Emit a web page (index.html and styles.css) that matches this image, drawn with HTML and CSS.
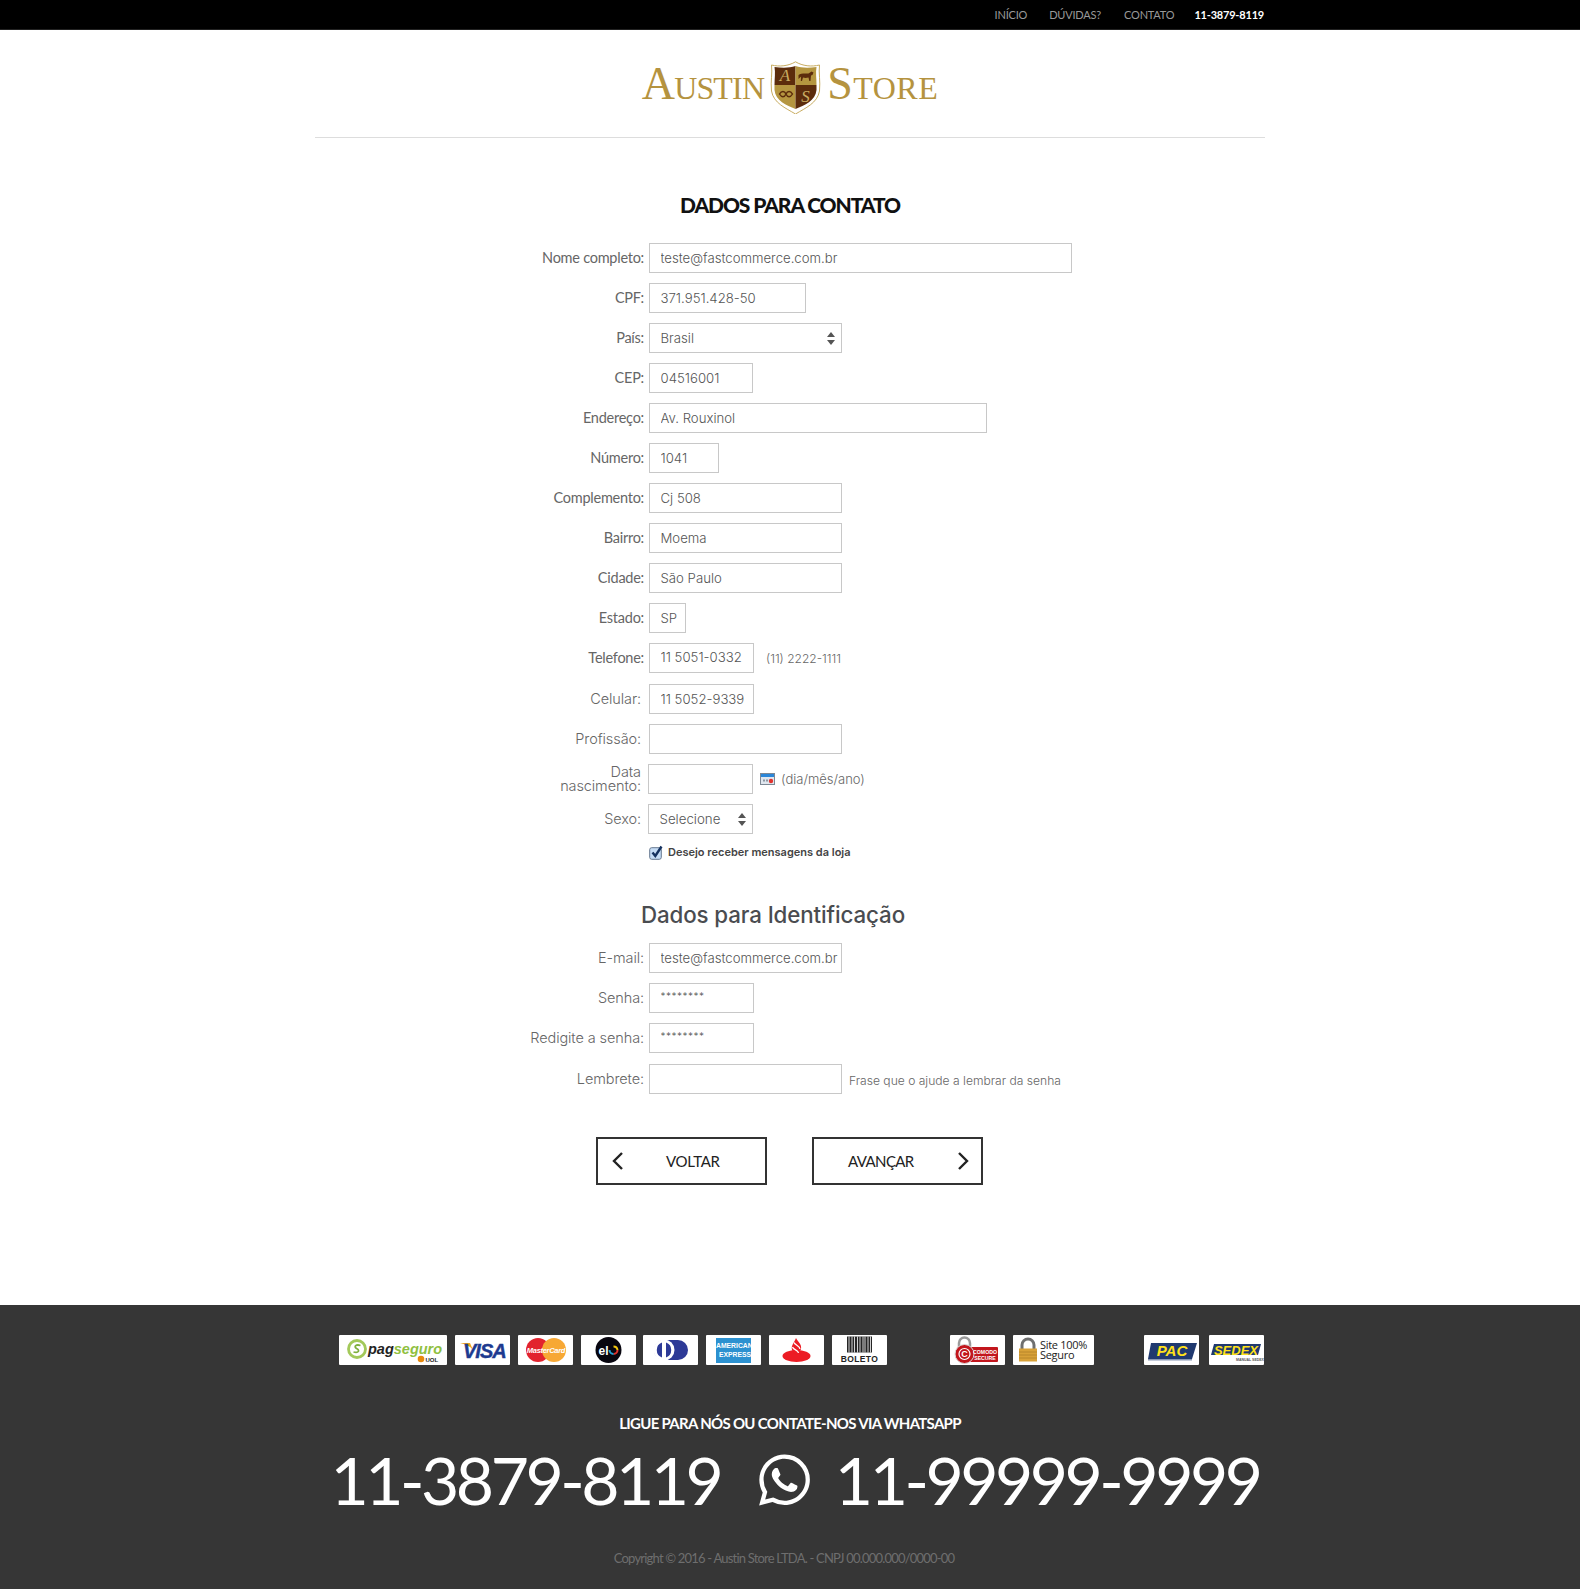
FILE: index.html
```html
<!DOCTYPE html>
<html lang="pt-BR">
<head>
<meta charset="utf-8">
<title>Austin Store - Dados para contato</title>
<link rel="stylesheet" href="styles.css">
</head>
<body>
<header class="topbar">
  <nav class="wrap topnav">
    <a class="nav-link nav-inicio">INÍCIO</a>
    <a class="nav-link nav-duvidas">DÚVIDAS?</a>
    <a class="nav-link nav-contato">CONTATO</a>
    <a class="nav-phone">11-3879-8119</a>
  </nav>
</header>

<div class="wrap">
  <div class="brand">
    <span class="brand-word word-austin">Austin</span>
    <svg class="shield" viewBox="0 0 50 53" aria-hidden="true">
      <path d="M1 4C9 6 18 5 25 .8 32 5 41 6 49 4 48 12 50 20 49 30 47 42 35 47 25 53 15 47 3 42 1 30 0 20 2 12 1 4Z" fill="#fff" stroke="#c9ad62" stroke-width="1"/>
      <path d="M25 5V24H4C4 17 5 12 4 6 12 7 19 7 25 5Z" fill="#5c2c0c"/>
      <path d="M25 5C31 7 38 7 46 6 45 12 46 17 46 24H25Z" fill="#b59640"/>
      <path d="M4 24H25V48C16 44 5 40 4 29Z" fill="#b59640"/>
      <path d="M25 24H46V29C45 40 34 44 25 48Z" fill="#5c2c0c"/>
      <text class="shield-letter" x="14.500" y="20" fill="#c9ad62">A</text>
      <text class="shield-letter" x="35" y="41" fill="#c9ad62">S</text>
      <path d="M28 14C30 12 35 12.500 38 12.500L41 10.500 43 11.500 42 14 40.500 14.500 40 20H38.800L38 16.500C36 17 34 17 32.500 16.500L31.500 20H30.300L30.600 15.500 28 18Z" fill="#5c2c0c"/>
      <path d="M9 33C11 29.500 14 29.500 15.500 33 17 36.500 20 36.500 22 33 20 29.500 17 29.500 15.500 33 14 36.500 11 36.500 9 33Z" fill="none" stroke="#5c2c0c" stroke-width="1.500"/>
    </svg>
    <span class="brand-word word-store">Store</span>
  </div>
  <hr class="rule">

  <main>
    <h1 class="title">DADOS PARA CONTATO</h1>

    <form class="form">
      <div class="row"><label class="label">Nome completo:</label><input class="field w-423" value="teste@fastcommerce.com.br"></div>
      <div class="row"><label class="label">CPF:</label><input class="field w-157" value="371.951.428-50"></div>
      <div class="row"><label class="label">País:</label><select class="field select w-193"><option>Brasil</option></select></div>
      <div class="row"><label class="label">CEP:</label><input class="field w-104" value="04516001"></div>
      <div class="row"><label class="label">Endereço:</label><input class="field w-338" value="Av. Rouxinol"></div>
      <div class="row"><label class="label">Número:</label><input class="field w-70" value="1041"></div>
      <div class="row"><label class="label">Complemento:</label><input class="field w-193" value="Cj 508"></div>
      <div class="row"><label class="label">Bairro:</label><input class="field w-193" value="Moema"></div>
      <div class="row"><label class="label">Cidade:</label><input class="field w-193" value="São Paulo"></div>
      <div class="row"><label class="label">Estado:</label><input class="field w-37" value="SP"></div>
      <div class="row row-wide"><label class="label">Telefone:</label><input class="field w-105 up" value="11 5051-0332"><span class="hint hint-tel">(11) 2222-1111</span></div>
      <div class="row"><label class="label label-light lab-short">Celular:</label><input class="field w-105" value="11 5052-9339"></div>
      <div class="row"><label class="label label-light lab-short">Profissão:</label><input class="field w-193"></div>
      <div class="row"><label class="label label-light lab-date">Data<br>nascimento:</label><input class="field w-105"><svg class="calendar" viewBox="0 0 15 12" aria-hidden="true"><rect x=".5" y=".5" width="14" height="11" fill="#dfe6ee" stroke="#7d8894"/><rect x="1" y="1" width="13" height="3" fill="#2b86d8"/><rect x="3" y="6.500" width="2" height="2" fill="#8c97a3"/><rect x="6" y="6.500" width="2" height="2" fill="#8c97a3"/><circle cx="11" cy="8" r="2.200" fill="#e2322d"/></svg><span class="hint hint-date">(dia/mês/ano)</span></div>
      <div class="row"><label class="label label-light lab-date">Sexo:</label><select class="field select select-sm w-105"><option>Selecione</option></select></div>
      <div class="row row-check">
        <svg class="check" viewBox="0 0 15 15" aria-hidden="true"><rect x=".7" y="2.700" width="11.600" height="11.600" rx="2" fill="#c5dcf5" stroke="#66788f"/><path d="M3.500 7.500 6.300 11 12.500 1.500" fill="none" stroke="#14315f" stroke-width="2.400"/></svg>
        <span class="check-text">Desejo receber mensagens da loja</span>
      </div>

      <h2 class="subtitle">Dados para Identificação</h2>

      <div class="row"><label class="label label-light">E-mail:</label><input class="field w-193" value="teste@fastcommerce.com.br"></div>
      <div class="row"><label class="label label-light">Senha:</label><input class="field w-105 stars" value="********"></div>
      <div class="row row-wide"><label class="label label-light">Redigite a senha:</label><input class="field w-105 stars" value="********"></div>
      <div class="row row-last"><label class="label label-light">Lembrete:</label><input class="field w-193"><span class="hint hint-rem">Frase que o ajude a lembrar da senha</span></div>

      <div class="actions">
        <button type="button" class="btn btn-back">
          <svg class="chev" viewBox="0 0 13 20" aria-hidden="true"><path d="M11 2 3 10l8 8" fill="none" stroke="#222" stroke-width="2.400"/></svg>
          <span class="btn-text">VOLTAR</span>
        </button>
        <button type="button" class="btn btn-next">
          <span class="btn-text">AVANÇAR</span>
          <svg class="chev" viewBox="0 0 13 20" aria-hidden="true"><path d="m2 2 8 8-8 8" fill="none" stroke="#222" stroke-width="2.400"/></svg>
        </button>
      </div>
    </form>
  </main>
</div>

<footer class="footer">
  <div class="wrap seals">
    <div class="seal-group pay">
      <svg class="seal s-pag" viewBox="0 0 108 30" aria-hidden="true">
        <rect width="108" height="30" rx="1" fill="#fff"/>
        <circle cx="18" cy="14" r="8.500" fill="none" stroke="#a3c95a" stroke-width="2.800"/>
        <path d="M21.500 10.500C17 9 14.500 11.500 17.500 13.500 21 15 20 18.500 14.500 17" fill="none" stroke="#7fb03d" stroke-width="1.800"/>
        <text class="pag-a" x="29" y="18.500">pag<tspan class="pag-b">seguro</tspan></text>
        <circle cx="82" cy="24" r="3.300" fill="#e8890c"/>
        <text class="pag-uol" x="86.500" y="26.500">UOL</text>
      </svg>
      <svg class="seal" viewBox="0 0 55 30" aria-hidden="true">
        <rect width="55" height="30" rx="1" fill="#fff"/>
        <path d="M5 8H15L18 15C15 11 10 9 5 8Z" fill="#eea41e"/>
        <text class="visa" x="8" y="23">VISA</text>
      </svg>
      <svg class="seal" viewBox="0 0 55 30" aria-hidden="true">
        <rect width="55" height="30" rx="1" fill="#fff"/>
        <circle cx="20" cy="15" r="12" fill="#e2232e"/>
        <circle cx="36" cy="15" r="12" fill="#f7a834"/>
        <text class="mc" x="28" y="18">MasterCard</text>
      </svg>
      <svg class="seal" viewBox="0 0 55 30" aria-hidden="true">
        <rect width="55" height="30" rx="1" fill="#fff"/>
        <circle cx="27.500" cy="15" r="13" fill="#08060f"/>
        <text class="elo" x="17.500" y="19.500">el</text>
        <path d="M32.500 11.500A4 4 0 0 1 36.500 15" fill="none" stroke="#f1c40f" stroke-width="2"/>
        <path d="M36.500 15A4 4 0 0 1 32.500 19" fill="none" stroke="#e2322d" stroke-width="2"/>
        <path d="M32.500 19A4 4 0 0 1 28.500 15" fill="none" stroke="#1da1d8" stroke-width="2"/>
      </svg>
      <svg class="seal" viewBox="0 0 55 30" aria-hidden="true">
        <rect width="55" height="30" rx="1" fill="#fff"/>
        <rect x="11" y="5" width="34" height="20" rx="10" fill="#2d3a97"/>
        <circle cx="21" cy="15" r="10.500" fill="#fff"/>
        <path d="M19 7.500A8 8 0 0 0 19 22.500ZM23 7.500A8 8 0 0 1 23 22.500Z" fill="#2d3a97"/>
      </svg>
      <svg class="seal" viewBox="0 0 55 30" aria-hidden="true">
        <rect width="55" height="30" rx="1" fill="#fff"/>
        <rect x="10" y="3" width="35" height="25" fill="#2c91d0"/>
        <text class="amex" x="10" y="13">AMERICAN</text>
        <text class="amex" x="45" y="22" text-anchor="end">EXPRESS</text>
      </svg>
      <svg class="seal" viewBox="0 0 55 30" aria-hidden="true">
        <rect width="55" height="30" rx="1" fill="#fff"/>
        <ellipse cx="27.500" cy="21" rx="14" ry="6" fill="#ec1c24"/>
        <path d="M27 3C29 7 33 9 32 14 31 17 29 19 27.500 20 24 18 22 15 23 11 24 8 26 6 27 3Z" fill="#ec1c24"/>
        <path d="M25 7.500C26 10 31 11 31 14M23.500 12C24.500 15 29 15 29.500 18" fill="none" stroke="#fff" stroke-width="1.300"/>
      </svg>
      <svg class="seal" viewBox="0 0 55 30" aria-hidden="true">
        <rect width="55" height="30" rx="1" fill="#fff"/>
        <path d="M15 1.500H40V17.500H15Z" fill="#252525"/>
        <path d="M17 1.500V17.500M20 1.500V17.500M22.500 1.500V17.500M25.500 1.500V17.500M28 1.500V17.500M31 1.500V17.500M33 1.500V17.500M36 1.500V17.500M38.500 1.500V17.500" stroke="#fff" stroke-width=".8"/>
        <text class="boleto" x="27.500" y="26.500">BOLETO</text>
      </svg>
    </div>
    <div class="seal-group secure">
      <svg class="seal" viewBox="0 0 55 30" aria-hidden="true">
        <rect width="55" height="30" rx="1" fill="#fff"/>
        <path d="M9 13V8A5.500 5.500 0 0 1 20 8V13" fill="none" stroke="#9a9a9a" stroke-width="2.500"/>
        <rect x="16" y="12" width="32" height="15" rx="1" fill="#c2161d"/>
        <circle cx="14.500" cy="19" r="9.500" fill="#c2161d" stroke="#d9d9d9" stroke-width="1"/>
        <circle cx="14.500" cy="19" r="5.500" fill="none" stroke="#fff" stroke-width="1.200"/>
        <text class="comodo-c" x="14.500" y="22">C</text>
        <text class="comodo" x="35" y="18.500">COMODO</text>
        <text class="comodo" x="35" y="24.500">SECURE</text>
      </svg>
      <svg class="seal s-site" viewBox="0 0 81 30" aria-hidden="true">
        <rect width="81" height="30" rx="1" fill="#fff"/>
        <path d="M9 14V10A6 6 0 0 1 21 10V14" fill="none" stroke="#6f6f6f" stroke-width="3"/>
        <rect x="6" y="13.500" width="18" height="13" fill="#d8a138"/>
        <path d="M6 17H24M6 20H24M6 23H24" stroke="#b8862a" stroke-width="1"/>
        <text class="site" x="27" y="14">Site 100%</text>
        <text class="site" x="27" y="24">Seguro</text>
      </svg>
    </div>
    <div class="seal-group ship">
      <svg class="seal" viewBox="0 0 55 30" aria-hidden="true">
        <rect width="55" height="30" rx="1" fill="#fff"/>
        <path d="M7 8H53L48 24H4Z" fill="#20396f"/>
        <text class="pac" x="28" y="20.500">PAC</text>
        <rect x="4" y="24" width="44" height="1.500" fill="#8a98b5"/>
      </svg>
      <svg class="seal" viewBox="0 0 55 30" aria-hidden="true">
        <rect width="55" height="30" rx="1" fill="#fff"/>
        <path d="M5 9H52L49 20H2Z" fill="#20396f"/>
        <text class="sedex" x="27" y="19.500">SEDEX</text>
        <text class="sedex-sub" x="41" y="25.500">MANUAL SEDEX</text>
      </svg>
    </div>
  </div>

  <p class="call">LIGUE PARA NÓS OU CONTATE-NOS VIA WHATSAPP</p>
  <div class="phones">
    <span class="phone">11-3879-8119</span>
    <svg class="wa" viewBox="0 0 24 24" aria-hidden="true"><path fill="#fff" d="M17.472 14.382c-.297-.149-1.758-.867-2.03-.967-.273-.099-.471-.148-.67.15-.197.297-.767.966-.94 1.164-.173.199-.347.223-.644.075-.297-.15-1.255-.463-2.39-1.475-.883-.788-1.48-1.761-1.653-2.059-.173-.297-.018-.458.13-.606.134-.133.298-.347.446-.52.149-.174.198-.298.298-.497.099-.198.05-.371-.025-.52-.075-.149-.669-1.612-.916-2.207-.242-.579-.487-.5-.669-.51-.173-.008-.371-.01-.57-.01-.198 0-.52.074-.792.372-.272.297-1.04 1.016-1.04 2.479 0 1.462 1.065 2.875 1.213 3.074.149.198 2.096 3.2 5.077 4.487.709.306 1.262.489 1.694.625.712.227 1.36.195 1.871.118.571-.085 1.758-.719 2.006-1.413.248-.694.248-1.289.173-1.413-.074-.124-.272-.198-.57-.347m-5.421 7.403h-.004a9.87 9.87 0 01-5.031-1.378l-.361-.214-3.741.982.998-3.648-.235-.374a9.86 9.86 0 01-1.51-5.26c.001-5.45 4.436-9.884 9.888-9.884 2.64 0 5.122 1.03 6.988 2.898a9.825 9.825 0 012.893 6.994c-.003 5.45-4.437 9.884-9.885 9.884m8.413-18.297A11.815 11.815 0 0012.05 0C5.495 0 .16 5.335.157 11.892c0 2.096.547 4.142 1.588 5.945L.057 24l6.305-1.654a11.882 11.882 0 005.683 1.448h.005c6.554 0 11.89-5.335 11.893-11.893a11.821 11.821 0 00-3.48-8.413z"/></svg>
    <span class="phone">11-99999-9999</span>
  </div>
  <p class="copy">Copyright © 2016 - Austin Store LTDA. - CNPJ 00.000.000/0000-00</p>
</footer>
</body>
</html>
```

FILE: styles.css
```css
* { box-sizing: border-box; }
html, body { margin: 0; padding: 0; background: #fff; }
body { font-family: "Lato", "Liberation Sans", sans-serif; color: #555; }
.wrap { width: 950px; margin: 0 auto; }

/* top bar */
.topbar { height: 30px; background: #000; border-bottom: 1px solid #222; }
.topnav { display: flex; justify-content: flex-end; align-items: center; height: 29px; padding-right: 1px; font-size: 11px; letter-spacing: -.2px; }
.nav-link { color: #999; }
.nav-duvidas { margin-left: 22px; }
.nav-contato { margin-left: 23px; }
.nav-phone { margin-left: 20px; color: #fff; font-weight: 700; }

/* brand */
.brand { display: flex; justify-content: center; align-items: flex-start; height: 107px; gap: 6px; padding-top: 31px; }
.brand-word { font-family: "Liberation Serif", serif; font-variant: small-caps; font-size: 46px; line-height: 46px; color: #b5933f; }
.word-austin { letter-spacing: -.85px; }
.word-store { letter-spacing: .5px; }
.shield { width: 51px; height: 53px; flex: none; }
.shield-letter { font-family: "Liberation Serif", serif; font-style: italic; font-size: 17px; text-anchor: middle; }
.rule { border: 0; border-top: 1px solid #ddd; margin: 0; }

/* titles */
.title { margin: 54px 0 26px; height: 25px; text-align: center; font-size: 21px; line-height: 25px; font-weight: 900; color: #111; letter-spacing: -1.1px; }
.subtitle { margin: 40px 0 13px; padding-left: 197px; height: 30px; font-family: "Inter", sans-serif; font-size: 22.300px; line-height: 30px; font-weight: 500; color: #4a4c50; letter-spacing: -.1px; }

/* form */
.form { padding-left: 129px; }
.row { display: flex; align-items: center; height: 30px; margin-bottom: 10px; }
.row-wide { margin-bottom: 11px; }
.row-check { height: 16px; margin: 9px 0 0; padding-left: 205px; }
.label { width: 200px; flex: none; margin-right: 5px; padding-bottom: 2px; text-align: right; font-size: 14.500px; color: #666; letter-spacing: -.25px; }
.label-light { padding-bottom: 1px; font-family: "Inter", sans-serif; font-weight: 300; font-size: 14.500px; line-height: 14px; color: #666; letter-spacing: -.1px; }
.lab-short { width: 197px; margin-right: 8px; }
.lab-date { width: 197px; margin-right: 7px; }
.field { height: 30px; flex: none; padding: 0 0 0 10.500px; border: 1px solid #c8c8c8; border-radius: 0; background: #fff; font-family: "Inter", sans-serif; font-weight: 300; font-size: 13.200px; color: #555; outline: 0; }
.up { padding-bottom: 2px; }
.stars { padding-bottom: 4px; font-size: 10px; letter-spacing: .5px; }
.select { appearance: none; -webkit-appearance: none; background-repeat: no-repeat; background-position: right 6px center; background-size: 8px 13px; background-image: url("data:image/svg+xml,%3Csvg xmlns='http://www.w3.org/2000/svg' viewBox='0 0 8 13'%3E%3Cpath d='M4 0 8 5H0ZM4 13 0 8H8Z' fill='%23555'/%3E%3C/svg%3E"); }
.select-sm { font-size: 13.300px; }
.w-423 { width: 423px; }
.w-338 { width: 338px; }
.w-193 { width: 193px; }
.w-157 { width: 157px; }
.w-105 { width: 105px; }
.w-104 { width: 104px; }
.w-70 { width: 70px; }
.w-37 { width: 37px; }
.hint { font-family: "Inter", sans-serif; font-weight: 300; color: #666; }
.hint-tel { margin-left: 12px; font-size: 12px; }
.hint-date { margin-left: 6px; font-size: 13px; }
.hint-rem { margin-left: 7px; padding-top: 3px; font-size: 12.100px; }
.calendar { width: 15px; height: 12px; margin-left: 7px; }
.check { width: 15px; height: 15px; flex: none; }
.check-text { margin-left: 4px; font-family: "Inter", sans-serif; font-weight: 600; font-size: 11px; color: #444; }

/* buttons */
.actions { display: flex; gap: 45px; margin: 43px 0 0 -48px; padding-left: 200px; }
.btn { display: flex; align-items: center; width: 171px; height: 48px; padding: 0; border: 2px solid #333; background: #fff; font-family: "Lato", sans-serif; font-size: 15px; letter-spacing: -.3px; color: #222; }
.btn-back { padding-left: 13px; }
.btn-next { justify-content: space-between; padding: 0 11px 0 34px; letter-spacing: -.6px; }
.chev { width: 13px; height: 20px; flex: none; }
.btn-back .btn-text { margin-left: 42px; }

/* footer */
.footer { height: 284px; margin-top: 120px; padding-top: 30px; background: #363636; text-align: center; }
.seals { display: flex; align-items: center; justify-content: flex-end; height: 30px; padding-right: 1px; }
.seal-group { display: flex; gap: 7.850px; }
.secure { margin-left: 63px; gap: 8px; }
.ship { margin-left: 50px; gap: 10px; }
.seal { display: block; width: 55px; height: 30px; }
.s-pag { width: 108px; }
.s-site { width: 81px; }
.pag-a { font: italic 700 14.500px "Liberation Sans", sans-serif; fill: #222; }
.pag-b { fill: #8fc03f; }
.pag-uol { font: 700 6px "Liberation Sans", sans-serif; fill: #222; }
.visa { font: italic 700 20px "Liberation Sans", sans-serif; fill: #1d3a8f; letter-spacing: -1px; stroke: #1d3a8f; stroke-width: .4px; }
.mc { font: italic 700 7.500px "Liberation Sans", sans-serif; fill: #fff; text-anchor: middle; letter-spacing: -.3px; }
.elo { font: 700 12px "Liberation Sans", sans-serif; fill: #fff; }
.amex { font: 700 6.800px "Liberation Sans", sans-serif; fill: #fff; }
.boleto { font: 700 8.500px "Liberation Sans", sans-serif; fill: #222; text-anchor: middle; letter-spacing: .4px; }
.comodo { font: 700 5.200px "Liberation Sans", sans-serif; fill: #fff; text-anchor: middle; }
.comodo-c { font: 700 9px "Liberation Sans", sans-serif; fill: #fff; text-anchor: middle; }
.site { font: 400 11px "Open Sans", sans-serif; fill: #222; letter-spacing: -.3px; }
.pac { font: italic 700 15px "Liberation Sans", sans-serif; fill: #ffe11a; text-anchor: middle; }
.sedex { font: italic 700 13px "Liberation Sans", sans-serif; fill: #ffe11a; text-anchor: middle; }
.sedex-sub { font: 700 3.500px "Liberation Sans", sans-serif; fill: #555; text-anchor: middle; }
.call { margin: 47px 0 0; height: 22px; font-size: 15px; line-height: 22px; font-weight: 700; color: #fff; letter-spacing: -.7px; }
.phones { display: flex; justify-content: center; align-items: center; height: 80px; margin-top: 6px; padding-left: 10px; color: #fff; }
.phone { font-size: 66px; line-height: 80px; font-weight: 400; letter-spacing: -3.500px; }
.wa { width: 51px; height: 52px; margin: 0 24.500px 0 39px; flex: none; }
.copy { margin: 29px 0 0; padding-right: 12px; font-size: 13px; line-height: 18px; color: #6e6e6e; letter-spacing: -.8px; }
```
